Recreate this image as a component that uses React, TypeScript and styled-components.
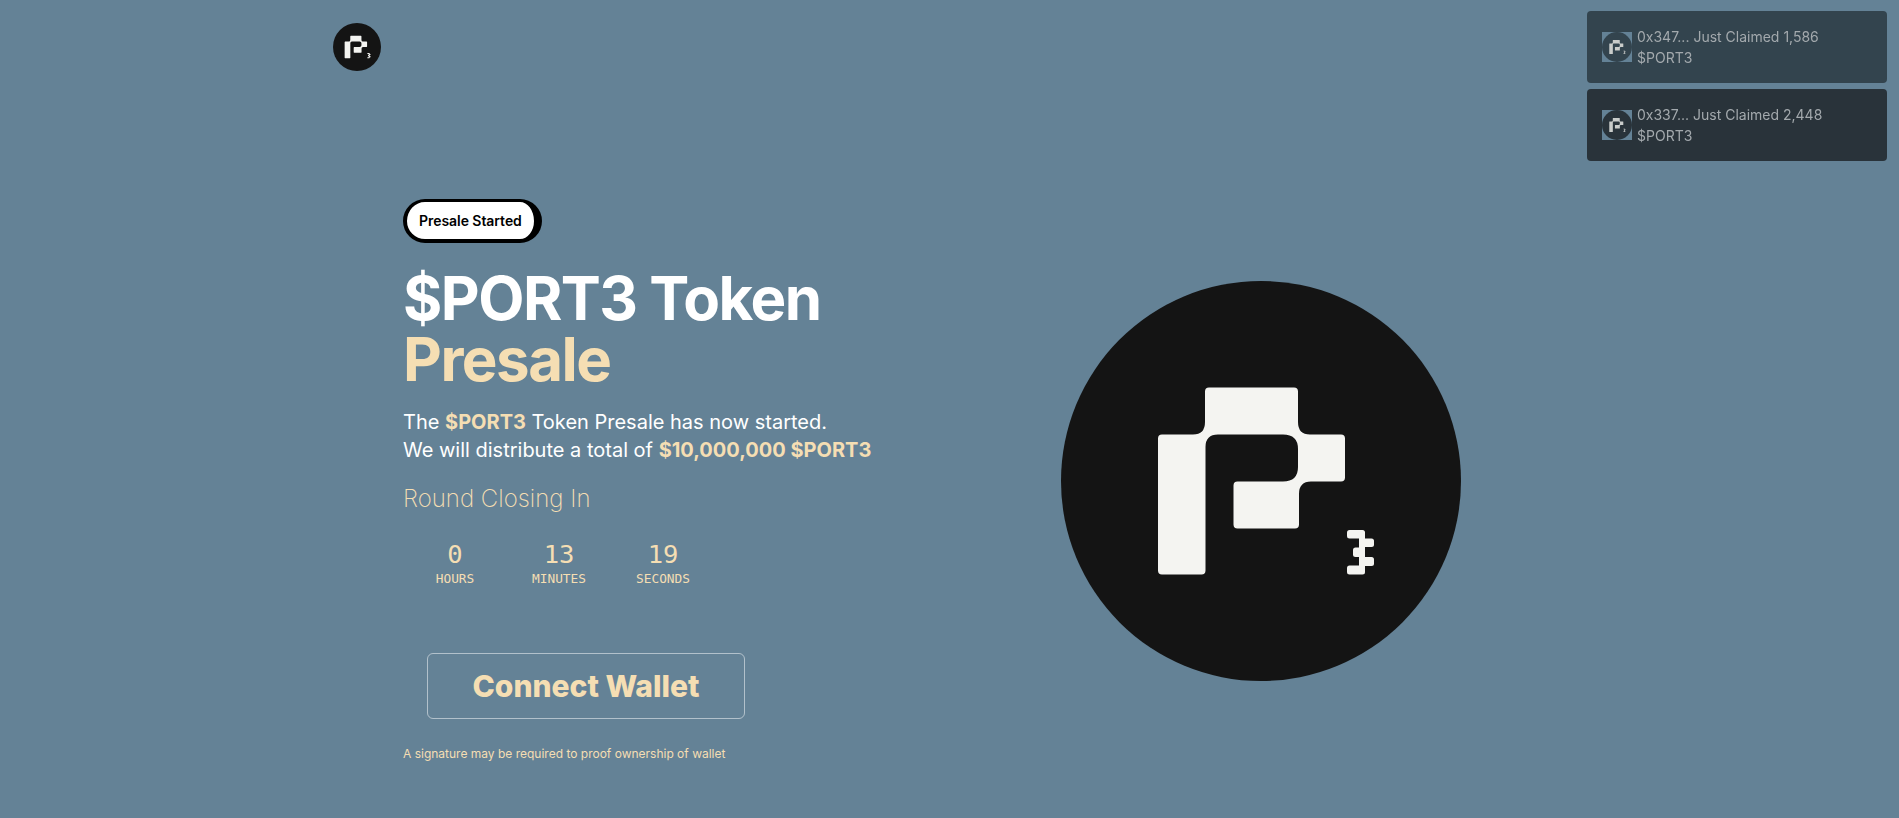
import React from 'react';
import styled, { createGlobalStyle } from 'styled-components';

const wheat = '#f5deb3';

const GlobalStyle = createGlobalStyle`
  html, body {
    margin: 0;
    padding: 0;
    background: #648296;
  }
  * {
    box-sizing: border-box;
  }
  body {
    font-family: Inter, "Noto Sans", sans-serif;
  }
`;

const Page = styled.div`
  height: 818px;
  overflow: hidden;
`;

const Container = styled.div`
  width: 1233px;
  margin: 0 auto;
`;

const Header = styled.header`
  height: 70px;
  padding-top: 23px;
  display: flex;
`;

const Hero = styled.main`
  display: grid;
  grid-template-columns: 624px 608px;
  padding-top: 129px;
`;

const Intro = styled.section`
  padding-left: 70px;
`;

const Pill = styled.div`
  display: inline-block;
  height: 44px;
  padding: 0 12px;
  border-style: solid;
  border-color: #000;
  border-width: 3px 8px 4px 4px;
  border-radius: 22px;
  background: #fff;
  color: #000;
  font-size: 14px;
  font-weight: 600;
  line-height: 37px;
  letter-spacing: -0.05px;
`;

const Title = styled.h1`
  margin: 25px 0 0;
  color: #fff;
  font-size: 60px;
  font-weight: 700;
  line-height: 61px;
  letter-spacing: -1.5px;
`;

const Accent = styled.span`
  color: ${wheat};
`;

const Lead = styled.p`
  margin: 18px 0 0;
  color: #fff;
  font-size: 20px;
  font-weight: 400;
  line-height: 28px;
`;

const LeadAccent = styled.strong`
  color: ${wheat};
  font-weight: 700;
`;

const RoundLabel = styled.div`
  margin-top: 19px;
  color: ${wheat};
  font-size: 24px;
  font-weight: 200;
  line-height: 32px;
`;

const Countdown = styled.div`
  display: flex;
  margin-top: 25px;
`;

const Cell = styled.div`
  width: 104px;
  display: flex;
  flex-direction: column;
  align-items: center;
  color: ${wheat};
  font-family: "DejaVu Sans Mono", "Liberation Mono", monospace;
`;

const CellValue = styled.span`
  font-size: 25.5px;
  line-height: 28px;
`;

const CellLabel = styled.span`
  margin-top: 3px;
  font-size: 12.8px;
  line-height: 16px;
`;

const ConnectButton = styled.button`
  display: block;
  width: 318px;
  height: 66px;
  margin: 66px 0 0 24px;
  border: 1px solid rgba(255, 255, 255, 0.5);
  border-radius: 6px;
  background: transparent;
  color: ${wheat};
  font-family: inherit;
  font-size: 30px;
  font-weight: 800;
`;

const Note = styled.p`
  margin: 27px 0 0;
  color: ${wheat};
  font-size: 12px;
  line-height: 16px;
`;

const Visual = styled.div`
  display: flex;
  justify-content: center;
  padding-top: 82px;
`;

const Toasts = styled.aside`
  position: fixed;
  top: 11px;
  right: 12px;
  width: 300px;
  display: flex;
  flex-direction: column;
  gap: 6px;
`;

const Toast = styled.div<{ $bg: string }>`
  height: 72px;
  padding: 0 15px;
  display: flex;
  align-items: center;
  gap: 5px;
  border-radius: 4px;
  background: ${p => p.$bg};
  color: #a3a9ad;
  font-size: 14px;
  line-height: 21px;
`;

const ToastIcon = styled.div`
  width: 30px;
  height: 30px;
  flex: none;
  background: #648296;
`;

const Logo = ({ size, fill = '#141414', mark = '#f4f4f1' }: { size: number; fill?: string; mark?: string }) => (
  <svg width={size} height={size} viewBox="0 0 400 400" style={{ display: 'block' }}>
    <circle cx="200" cy="200" r="200" fill={fill} />
    <path
      fill={mark}
      d="M101 153.5H132Q144 153.5 144 141V110.5Q144 106.5 148 106.5H233Q237 106.5 237 110.5V141Q237 153.5 249 153.5H280Q284 153.5 284 157.5V196.5Q284 200.5 280 200.5H250Q238 200.5 238 213V243.5Q238 247.5 234 247.5H176.5Q172.5 247.5 172.5 243.5V204.5Q172.5 200.5 176.5 200.5H222Q237 200.5 237 186V168Q237 153.5 222 153.5H157Q144.5 153.5 144.5 166V289.5Q144.5 293.5 140.5 293.5H101Q97 293.5 97 289.5V157.5Q97 153.5 101 153.5Z"
    />
    <g fill={mark}>
      <rect x="298" y="251" width="6" height="40" />
      <rect x="286" y="249" width="18" height="8.5" rx="2.5" />
      <rect x="298" y="257.5" width="15" height="8.5" rx="2.5" />
      <rect x="292" y="266.5" width="12" height="9.5" rx="2.5" />
      <rect x="298" y="276" width="15" height="9" rx="2.5" />
      <rect x="286" y="284.5" width="18" height="9" rx="2.5" />
    </g>
  </svg>
);

const countdown = [
  { value: '0', label: 'HOURS' },
  { value: '13', label: 'MINUTES' },
  { value: '19', label: 'SECONDS' },
];

const claims = [
  { who: '0x347...', amount: '1,586', bg: '#33444e' },
  { who: '0x337...', amount: '2,448', bg: '#29333a' },
];

export default function App() {
  return (
    <Page>
      <GlobalStyle />
      <Container>
        <Header>
          <Logo size={48} />
        </Header>
        <Hero>
          <Intro>
            <Pill>Presale Started</Pill>
            <Title>
              $PORT3 Token
              <br />
              <Accent>Presale</Accent>
            </Title>
            <Lead>
              The <LeadAccent>$PORT3</LeadAccent> Token Presale has now started.
              <br />
              We will distribute a total of <LeadAccent>$10,000,000 $PORT3</LeadAccent>
            </Lead>
            <RoundLabel>Round Closing In</RoundLabel>
            <Countdown>
              {countdown.map(c => (
                <Cell key={c.label}>
                  <CellValue>{c.value}</CellValue>
                  <CellLabel>{c.label}</CellLabel>
                </Cell>
              ))}
            </Countdown>
            <ConnectButton>Connect Wallet</ConnectButton>
            <Note>A signature may be required to proof ownership of wallet</Note>
          </Intro>
          <Visual>
            <Logo size={400} />
          </Visual>
        </Hero>
      </Container>
      <Toasts>
        {claims.map(c => (
          <Toast key={c.who} $bg={c.bg}>
            <ToastIcon>
              <Logo size={30} fill={c.bg} mark="#c9ccca" />
            </ToastIcon>
            <div>
              {c.who} Just Claimed {c.amount}
              <br />
              $PORT3
            </div>
          </Toast>
        ))}
      </Toasts>
    </Page>
  );
}
